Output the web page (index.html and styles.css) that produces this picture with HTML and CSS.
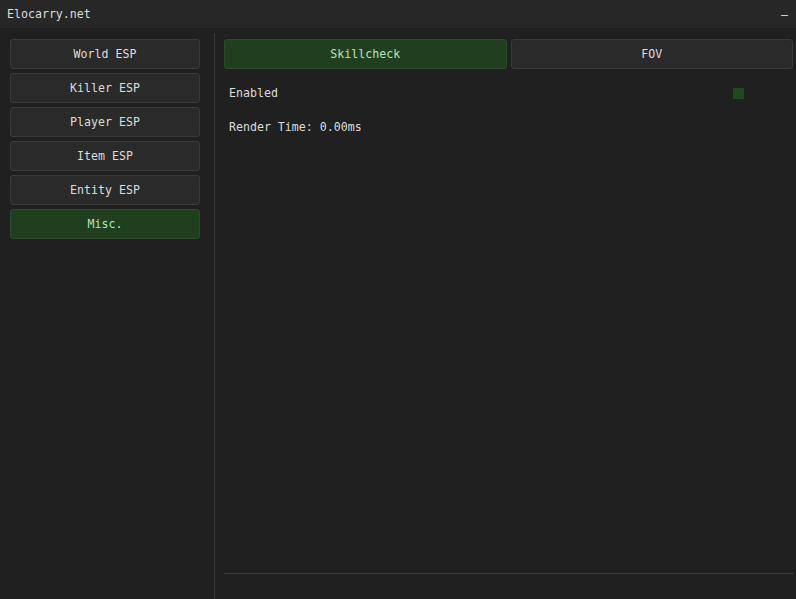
FILE: index.html
```html
<!DOCTYPE html>
<html lang="en">
<head>
    <meta charset="UTF-8">
    <title>Elocarry.net</title>
    <link rel="stylesheet" href="styles.css">
</head>
<body>
    <div class="title-bar">
        <span class="title">Elocarry.net</span>
        <span class="collapse">–</span>
    </div>

    <div class="window">
        <div class="sidebar">
            <div class="side-btn">World ESP</div>
            <div class="side-btn">Killer ESP</div>
            <div class="side-btn">Player ESP</div>
            <div class="side-btn">Item ESP</div>
            <div class="side-btn">Entity ESP</div>
            <div class="side-btn active">Misc.</div>
        </div>

        <div class="separator"></div>

        <div class="content">
            <div class="tabs">
                <div class="tab active">Skillcheck</div>
                <div class="tab">FOV</div>
            </div>

            <div class="row first">
                <span>Enabled</span>
                <span class="checkbox"></span>
            </div>
            <div class="row">
                <span>Render Time: 0.00ms</span>
            </div>

            <div class="bottom-line"></div>
        </div>
    </div>
</body>
</html>
```

FILE: styles.css
```css
/* Nền chung */
body {
    margin: 0;
    width: 796px;
    height: 599px;
    overflow: hidden;
    background: #202020;
    color: #dcdcdc;
    font-family: "DejaVu Sans Mono", "Liberation Mono", monospace;
    font-size: 11.6px;
}

/* Thanh tiêu đề */
.title-bar {
    height: 28px;
    background: #272727;
    display: flex;
    align-items: center;
    justify-content: space-between;
    padding: 0 8px 0 7px;
}

.collapse {
    line-height: 12px;
    padding-top: 2px;
}

/* Khung chính */
.window {
    display: flex;
    height: 571px;
}

.sidebar {
    width: 190px;
    padding: 11px 0 0 10px;
    display: flex;
    flex-direction: column;
    gap: 4px;
}

.side-btn {
    height: 28px;
    line-height: 28px;
    text-align: center;
    background: #2a2a2a;
    border: 1px solid #3a3a3a;
    border-radius: 3px;
}

.side-btn.active,
.tab.active {
    background: #1f3f1f;
    border-color: #2e4a2e;
    color: #b8e3b8;
}

/* Đường phân cách dọc */
.separator {
    width: 1px;
    margin: 5px 0 0 14px;
    background: #3a3a3a;
}

/* Vùng nội dung */
.content {
    flex: 1;
    padding: 11px 3px 0 9px;
    display: flex;
    flex-direction: column;
}

.tabs {
    display: flex;
    gap: 4px;
}

.tab {
    flex: 1;
    height: 28px;
    line-height: 28px;
    text-align: center;
    background: #2a2a2a;
    border: 1px solid #3a3a3a;
    border-radius: 3px;
}

.row {
    display: flex;
    justify-content: space-between;
    align-items: center;
    height: 34px;
    padding: 0 49px 0 5px;
}

.row.first {
    margin-top: 7px;
}

.checkbox {
    width: 11px;
    height: 11px;
    background: #1f4a1f;
}

.bottom-line {
    margin-top: auto;
    margin-bottom: 25px;
    height: 1px;
    background: #3c3c3c;
}
```
